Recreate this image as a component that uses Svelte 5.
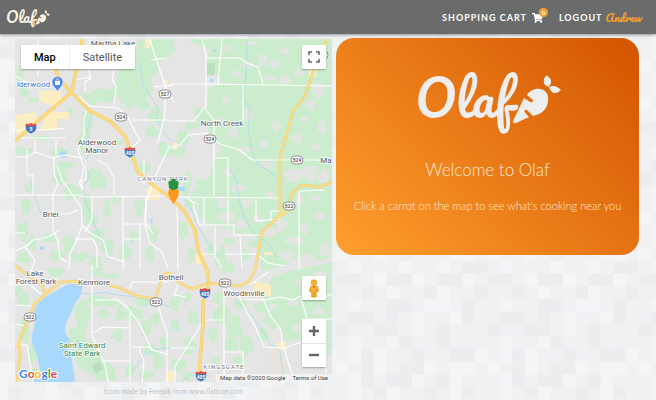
<script>
  const tileRows = [
    '121112112100',
    '001200210021',
    '110121102110',
    '121100122101',
    '100101211201',
    '011001210111',
    '121120110111',
    '120211011002',
    '210210021221',
    '120100210211',
    '121021101201',
    '211210111221'
  ];
  const tileShades = ['#ecedef', '#f0f1f3', '#f4f5f7'];
  const tiles = tileRows.flatMap((row, y) =>
    [...row].map((c, x) => ({ x: x * 12.6, y: y * 12.6, fill: tileShades[+c] }))
  );

  // Irregular patch of land: a wobbly closed outline around a centre.
  function patch([x, y, rx, ry], i) {
    const pts = [];
    for (let k = 0; k < 14; k++) {
      const a = (k / 14) * Math.PI * 2;
      const wobble = 0.95 + 0.3 * Math.sin(k * 2.7 + i * 1.9) * Math.cos(k * 1.3 + i);
      pts.push(`${(x + Math.cos(a) * rx * wobble).toFixed(1)} ${(y + Math.sin(a) * ry * wobble).toFixed(1)}`);
    }
    return 'M' + pts.join('L') + 'Z';
  }

  const woods = [
    [20, 75, 4, 8], [24, 92, 5, 6], [33, 100, 6, 3], [87, 123, 6, 14], [84, 142, 6, 12], [70, 112, 4, 5],
    [156, 115, 8, 9], [152, 132, 7, 6], [166, 150, 9, 8], [118, 142, 5, 4], [42, 138, 10, 3], [20, 150, 4, 5],
    [28, 152, 6, 4], [60, 152, 10, 5], [60, 175, 7, 11], [72, 192, 9, 8], [66, 165, 8, 4], [94, 178, 8, 11],
    [103, 183, 5, 6], [87, 207, 5, 14], [92, 220, 6, 6], [107, 208, 4, 11], [116, 200, 4, 5], [30, 188, 6, 4],
    [26, 206, 5, 9], [23, 231, 6, 10], [32, 243, 5, 8], [24, 258, 7, 6], [48, 238, 7, 5], [57, 255, 8, 6],
    [68, 244, 6, 9], [80, 257, 10, 5], [98, 235, 8, 7], [108, 247, 7, 8], [96, 262, 8, 6], [125, 252, 7, 9],
    [133, 236, 5, 7], [139, 207, 5, 10], [145, 168, 6, 6], [153, 234, 6, 9], [150, 254, 5, 9], [134, 158, 4, 3],
    [183, 138, 7, 8], [192, 126, 8, 4], [199, 112, 6, 5], [180, 152, 6, 6], [187, 181, 5, 9], [191, 203, 6, 8],
    [185, 190, 5, 6], [202, 190, 9, 12], [205, 211, 8, 8], [183, 230, 5, 10], [191, 255, 4, 8], [211, 70, 5, 6],
    [24, 300, 6, 8], [25, 330, 5, 15], [33, 352, 4, 12], [36, 374, 6, 7], [18, 290, 4, 6], [56, 272, 9, 5],
    [97, 272, 7, 5], [111, 276, 9, 3], [97, 301, 14, 6], [110, 303, 7, 5], [104, 314, 6, 5], [82, 317, 8, 17],
    [77, 337, 9, 12], [85, 355, 12, 16], [96, 365, 10, 14], [108, 373, 9, 10], [121, 313, 5, 9], [134, 314, 9, 8],
    [143, 302, 9, 5], [146, 328, 6, 9], [155, 318, 6, 6], [118, 335, 5, 7], [130, 370, 5, 8], [150, 350, 9, 6],
    [158, 361, 5, 9], [146, 375, 8, 5], [164, 343, 5, 7], [175, 303, 6, 8], [187, 297, 5, 5], [175, 325, 5, 7],
    [193, 318, 6, 8], [189, 346, 6, 10], [178, 365, 8, 7], [187, 376, 6, 5], [213, 335, 6, 8], [222, 315, 9, 11],
    [235, 327, 8, 12], [231, 344, 7, 8], [246, 345, 7, 11], [239, 362, 6, 7], [218, 298, 6, 6], [216, 361, 4, 4],
    [221, 258, 6, 12], [211, 250, 4, 8], [229, 268, 6, 6], [246, 255, 5, 6], [229, 241, 6, 4], [240, 304, 7, 5],
    [262, 307, 8, 6], [272, 319, 8, 10], [273, 299, 9, 6], [263, 335, 6, 8]
  ];

  const clearings = [
    [228, 48, 4, 3], [252, 43, 9, 2], [262, 60, 5, 7], [274, 64, 6, 5], [248, 65, 7, 3], [285, 51, 5, 4],
    [238, 74, 6, 4], [269, 78, 7, 3], [285, 80, 6, 5], [299, 73, 5, 4], [318, 90, 7, 8], [311, 105, 5, 6],
    [248, 115, 4, 8], [233, 133, 6, 6], [221, 121, 5, 4], [226, 100, 4, 4], [244, 150, 8, 4], [264, 144, 5, 5],
    [276, 126, 5, 6], [297, 138, 6, 5], [322, 127, 5, 8], [304, 119, 4, 4], [315, 147, 5, 4], [266, 165, 7, 4],
    [294, 175, 11, 7], [310, 173, 9, 8], [324, 177, 6, 8], [228, 172, 5, 5], [238, 188, 8, 4], [222, 202, 6, 7],
    [247, 203, 6, 5], [270, 195, 5, 4], [227, 217, 9, 6], [213, 228, 8, 5], [241, 224, 7, 6], [258, 219, 6, 5],
    [270, 232, 7, 6], [281, 225, 6, 7], [294, 241, 10, 5], [287, 255, 8, 6], [304, 229, 5, 6], [320, 216, 6, 5],
    [325, 250, 6, 7], [309, 261, 7, 5], [244, 238, 11, 6], [299, 200, 4, 6], [315, 198, 6, 3], [302, 283, 7, 4],
    [293, 303, 6, 4], [319, 311, 6, 5], [298, 328, 7, 5], [314, 336, 5, 5], [321, 274, 6, 4]
  ];

  const roads = [
    'M15 82H27L30 89M15 76L30 84L52 88M15 130H45L65 128M38 39V76M52 72L60 62L88 63',
    'M90 39L87 63L91 78L85 82V92M75 80L90 77M78 96L89 106L118 108L128 117L135 132L140 140L133 147',
    'M118 39L116 62L112 78L116 87L114 105M89 105L84 118V135L78 150L84 167L81 180L83 190',
    'M15 138H66M35 139V152M56 140V156M15 157H27L36 152L52 158L65 155L83 158',
    'M15 195L79 195L85 197L175 196M27 150V175H33V195M54 157V173L58 184L53 195V230L58 241L60 258L68 262',
    'M57 165L62 180L75 198L81 207L82 225L77 240L70 253L69 270M82 225L90 233L103 240L108 257L125 262',
    'M53 214H69L78 210M86 160V179L79 182L83 190M98 160L107 165L114 178V195M92 196V220L85 232M123 196V270',
    'M15 233H25M15 251L25 247L33 240L48 237L58 231M25 247L35 260L31 272M75 239L93 239L97 248V268',
    'M123 224H145L150 243L162 252L168 268M146 196L145 222L153 234M144 160V184M140 224V270M123 239H140',
    'M150 39L153 50L165 85L174 102M151 60L167 58M153 87L174 85M165 84V115L158 142M170 145L153 181L147 200L145 221',
    'M202 39L206 54V110L214 120V156M170 84H206L332 86M206 58H240L247 63L258 67L263 84M222 39L218 84',
    'M243 85V120M206 105L194 121H170M170 148L181 144L188 135L206 133L220 144L240 150L252 160H332M170 120H132',
    'M170 197L280 198M214 150V158H228V226M214 158V196M204 197V224M193 205L199 225H234V235H260M240 235L242 268',
    'M256 199V221L280 219M271 221V211H280M299 191V270M300 191L325 190M215 227V256L222 268M199 254H216M177 204L178 270M187 197L195 204',
    'M15 285L29 284L41 294M92 265V335L105 365L108 382M95 300H118L127 307L139 323L152 350L167 354M93 333L103 327L130 328M104 361H130',
    'M130 313V382M131 347H148L153 350M139 348L144 361L142 382M170 348H194M130 289L132 282H169M158 302L161 316L167 332V382M175 382V366L190 342L205 319',
    'M178 285L174 295L186 297M224 285V382M207 320H224M224 352H243V382M236 290L243 305L255 326L264 347L284 348L294 382',
    'M225 285L241 299L265 300L280 297L293 300L305 294L317 300L332 294M283 349L301 342M263 299L270 315L281 330L282 347',
    'M250 285L268 272M225 254H258M258 255L268 263L284 266M301 298L307 319H332M326 320V373M15 305L31 306M15 324L25 326M15 345H27L33 382'
  ];

  const creeks = [
    'M140 65L143 85L150 95L158 108L156 119L163 131L172 142',
    'M93 112L87 130L91 148L85 163L90 176L83 188L86 203L91 215L97 231L105 246L109 260',
    'M80 293L93 294L105 292L118 295L138 297L154 302L170 307',
    'M247 39L246 80L242 95L250 109L248 130L252 152L258 164L277 177',
    'M227 165L236 180L240 204L245 220L253 232L268 243L276 257',
    'M184 198L192 211L198 226L207 242L213 250',
    'M235 300L251 314L262 330L270 344L280 351L283 374',
    'M134 370L144 355L156 349L170 348M181 382L190 375L200 371',
    'M30 180L36 199L41 213M75 292L65 289'
  ];

  const freeways = [
    'M15 141L30 128L47 113L65 98L72 91L75 75L80 60L82 39',
    'M50 58L60 80L73 94L90 111L110 121L125 136L131 152L138 172L153 185L173 200L185 212L195 230L198 250L207 270L209 283L203 303V325L200 362L199 382'
  ];

  const highways = [
    'M17 382L20 355L19 342L30 315L35 303L47 293L60 282L77 281L97 282L120 288L137 296L155 299L160 285L162 275L170 273L178 282L192 289L208 283L227 285L240 286L249 281L255 270L262 232L277 218L288 211L292 193L302 185L320 187L332 182',
    'M327 39L315 66L305 96L293 111L287 133L280 156V214L276 220',
    'M15 265L27 275L42 285L45 294',
    'M15 346H20'
  ];

  const stateRoutes = [
    ['527', 165, 94], ['524', 121, 117], ['524', 210, 139], ['524', 297, 160], ['522', 289, 206],
    ['522', 30, 317], ['522', 156, 302], ['522', 225, 283]
  ];
  const interstates = [['5', 31, 128], ['405', 130, 152], ['405', 205, 293], ['405', 201, 376]];

  const places = [
    ['Martha Lake', 113, 46], ['North Creek', 222, 126], ['Alderwood', 97, 145], ['Manor', 97, 153],
    ['Brier', 51, 217], ['Lake', 35, 276], ['Forest Park', 36, 284], ['Kenmore', 94, 285],
    ['Bothell', 171, 280], ['Woodinville', 244, 296], ['Ma', 326, 163]
  ];

  const google = [['G', '#4285f4'], ['o', '#ea4335'], ['o', '#fbbc05'], ['g', '#4285f4'], ['l', '#34a853'], ['e', '#ea4335']];

  let view = $state('Map');
  let cartCount = $state(0);
</script>

{#snippet logo()}
  <svg class="logo" viewBox="0 0 146 62" role="img" aria-label="Olaf">
    <text class="wordmark" x="0" y="47">Olaf</text>
    <path d="M98.500 49L109 27L115 31Q118 32 118 29L112 24C115 19 121 17 125 18C132 19 134 25 133 30C132 38 128 41 124 43L118 45L112 39Q109 38 109.500 41L114 46L101 52Q97 53 98.500 49Z" />
    <path d="M133.500 16C127 14 128 7 131.700 4.300C137 8 137.500 12 133.500 16ZM134 16.500C138 13.500 142 15.500 146 19C141 24 136 22.500 134 16.500Z" />
  </svg>
{/snippet}

<div class="page">
  <svg class="backdrop" aria-hidden="true">
    <defs>
      <pattern id="mosaic" x="33.700" y="109.800" width="151.200" height="151.200" patternUnits="userSpaceOnUse">
        {#each tiles as t}
          <rect x={t.x} y={t.y} width="12.700" height="12.700" fill={t.fill} />
        {/each}
      </pattern>
    </defs>
    <rect width="100%" height="100%" fill="url(#mosaic)" />
  </svg>

  <header>
    <a class="brand" href="#home">{@render logo()}</a>
    <nav>
      <a class="cart" href="#cart">
        <span>SHOPPING CART</span>
        <span class="basket">
          <svg viewBox="0 0 576 512" aria-hidden="true">
            <path d="M528 301l47-208c4-15-8-29-23-29H159l-9-45C148 8 138 0 127 0H24C11 0 0 11 0 24v16c0 13 11 24 24 24h70l70 343c-17 10-28 28-28 49 0 31 25 56 56 56s56-25 56-56c0-16-6-30-17-40h210c-11 10-17 24-17 40 0 31 25 56 56 56s56-25 56-56c0-22-13-41-32-50l6-25c3-15-8-29-24-29H218l-7-32h294c11 0 21-8 23-19z" />
          </svg>
          <span class="badge">{cartCount}</span>
        </span>
      </a>
      <a class="account" href="#logout">LOGOUT <span class="user">Andrew</span></a>
    </nav>
  </header>

  <main>
    <section class="left">
      <div class="map">
        <svg class="canvas" viewBox="15 39 317 343" preserveAspectRatio="xMidYMid slice" role="img" aria-label="Map of carrots near Canyon Park">
          <rect x="15" y="39" width="317" height="343" fill="#e5e5e5" />
          <g fill="#cbeccd">
            <path d="M139 39L172 39L176 50L168 58L160 62L158 72L151 78L153 90L146 99L150 108L142 112L136 104L128 110L122 103L118 96L110 103L100 100L94 106L85 101L80 92L88 94L98 88L108 91L116 84L118 74L124 66L130 60L136 51Z" />
            <path d="M188 39H332V256L320 261L307 253L293 259L281 267L262 271L259 249L245 244L231 229L207 224L200 210L196 193L209 178L216 155L222 149L211 137L206 124L194 121L206 104L209 88L223 82L206 61L211 49L196 44Z" />
            <path d="M272 278L290 271L332 262V356L320 350L307 355L299 339L286 342L280 326L270 318L277 307L264 295Z" />
            {#each woods as w, i}<path d={patch(w, i)} />{/each}
          </g>
          <g fill="#e3e5e3">
            {#each clearings as c, i}<path d={patch(c, i)} />{/each}
          </g>
          <path fill="#b9dfbd" d="M207 63H215V75H207ZM73 343L79 340L84 346L78 350ZM92 366L99 361L103 369L96 373Z" />
          <path fill="#fceec3" d="M39 91H61V103L53 106L39 101ZM15 116L35 112L38 122L29 130H15ZM15 129H24L19 137ZM44 112H69V119H57V130H42ZM147 188L158 184L160 200H147ZM145 39H150V48H145ZM163 80H168V86H163ZM309 69H316V77H309ZM254 281L271 285V297L254 291ZM166 371H174V382H166ZM196 255L203 251V264H196ZM264 252H273V255H264ZM173 143H177V150H173ZM278 342H286V350H278Z" />
          <path fill="#e8e3db" d="M137 284L150 284V293H137ZM271 349L283 351L291 374H268Z" />
          <g class="creek">{#each creeks as d}<path {d} />{/each}</g>
          <path fill="#a8d9fd" d="M63 287C70 282 77 285 83 285L80 297L75 303L71 313L66 323L65 332L70 341L71 352L73 367L75 382H33L40 371L37 356L32 343V334L35 323L34 311L39 302L47 296ZM60 152L66 151V157L60 158ZM40 246H44V250H40ZM178 187H185V191H178ZM150 220L153 217L152 226ZM213 49L217 50L215 53ZM210 79H213V82H210Z" />
          <g class="road">{#each roads as d}<path {d} />{/each}</g>
          <g class="edge">{#each highways as d}<path {d} />{/each}</g>
          <g class="fill">{#each highways as d}<path {d} />{/each}</g>
          <g class="edge wide">{#each freeways as d}<path {d} />{/each}</g>
          <g class="fill wide">{#each freeways as d}<path {d} />{/each}</g>
          {#each stateRoutes as [n, x, y]}
            <rect x={x - 6} y={y - 4} width="12" height="8" rx="4" fill="#fff" stroke="#777" stroke-width=".8" />
            <text class="shield" {x} y={y + 2}>{n}</text>
          {/each}
          <rect x="317" y="51" width="11" height="8" rx="4" fill="#fff" stroke="#777" stroke-width=".8" />
          {#each interstates as [n, x, y]}
            <g transform="translate({x} {y})">
              <path fill="#4477bd" stroke="#fff" stroke-width=".6" d="M-5 -4L5 -4Q8 3 0 6Q-8 3 -5 -4Z" />
              <path fill="#dc5148" d="M-5 -4.500Q-3 -3.500 0 -5Q3 -3.500 5 -4.500L5.500 -2H-5.500Z" />
              <text class="shield light" x="0" y="3">{n}</text>
            </g>
          {/each}
          {#each places as [name, x, y]}<text class="place" {x} {y}>{name}</text>{/each}
          <text class="place area" x="163" y="181">CANYON PARK</text>
          <text class="place area" x="224" y="369">KINGSGATE</text>
          <text class="place park" x="82" y="348">Saint Edward</text>
          <text class="place park" x="82" y="356">State Park</text>
          <text class="place shop" x="50" y="87">lderwood</text>
          <path fill="#4688f1" stroke="#fff" stroke-width=".5" d="M57.500 92C56 87 52 87 52 82A5.500 5.500 0 0 1 63 82C63 87 59 87 57.500 92Z" />
          <path fill="#fff" d="M55 81H60V85H55Z" />
          <path fill="none" stroke="#fff" stroke-width=".8" d="M56 81V79.500Q57.500 77.500 59 79.500V81" />
          <path fill="#ff981d" d="M168.500 190Q173.500 186 178.500 190Q179.500 195 176 200L173.500 204.500L171 200Q167.500 195 168.500 190Z" />
          <path fill="#23943f" d="M168.500 182Q169.500 180 171 181Q171.500 178.500 173.500 178.500Q175.500 178.500 176 181Q177.500 180 178.500 182Q179 184 178 185.500Q179 188 176.500 189Q173.500 191 170.500 189Q168 188 169 185.500Q168 184 168.500 182Z" />
          <path fill="none" stroke="#ee7f0e" stroke-width=".6" d="M169 193H172M175 196H178M171 199H173" />
        </svg>

        <div class="types">
          {#each ['Map', 'Satellite'] as kind}
            <button class:active={view === kind} onclick={() => (view = kind)}>{kind}</button>
          {/each}
        </div>

        <div class="controls">
          <button class="tool" aria-label="Toggle fullscreen view">
            <svg viewBox="0 0 12 12"><path d="M1 4V1H4M8 1H11V4M11 8V11H8M4 11H1V8" fill="none" stroke="#666" stroke-width="1.600" /></svg>
          </button>
          <div class="lower">
            <button class="tool" aria-label="Street View">
              <svg class="pegman" viewBox="0 0 12 20">
                <path fill="#f5b22c" stroke="#dc9018" stroke-width=".7" d="M2.500 7.500H9.500L11 13L9.500 13.500L8.500 11V19H3.500V11L2.500 13.500L1 13Z" />
                <circle cx="6" cy="3.800" r="3" fill="#f5b22c" stroke="#dc9018" stroke-width=".7" />
                <path d="M4 7.500L6 9.500L8 7.500Z" fill="#d7652b" />
                <path d="M6 13V19" stroke="#c77c17" stroke-width=".8" />
              </svg>
            </button>
            <div class="zoom">
              <button aria-label="Zoom in"><svg viewBox="0 0 12 12"><path d="M6 1V11M1 6H11" stroke="#666" stroke-width="2.400" /></svg></button>
              <button aria-label="Zoom out"><svg viewBox="0 0 12 12"><path d="M1 6H11" stroke="#666" stroke-width="2.400" /></svg></button>
            </div>
          </div>
        </div>

        <a class="google" href="#google" aria-label="Google">{#each google as [c, color]}<span style:color>{c}</span>{/each}</a>
        <div class="legal"><span>Map data ©2020 Google</span><a href="#terms">Terms of Use</a></div>
      </div>
      <p class="credit">Icons made by Freepik from www.flaticon.com</p>
    </section>

    <section class="welcome">
      {@render logo()}
      <h1>Welcome to Olaf</h1>
      <p>Click a carrot on the map to see what's cooking near you</p>
    </section>
  </main>
</div>

<style>
  :global(body) { margin: 0; background: #f0f1f3; }
  .page { position: relative; min-height: 100vh; overflow: hidden; font-family: Lato, sans-serif; }
  .backdrop { position: absolute; inset: 0; width: 100%; height: 100%; z-index: -1; }
  a { color: inherit; text-decoration: none; }
  button { border: 0; margin: 0; padding: 0; background: #fff; cursor: pointer; }

  header {
    display: flex; align-items: center; justify-content: space-between;
    position: relative; box-sizing: border-box; height: 34px; padding: 2px 14px 0 6px;
    background: rgba(91, 92, 92, 0.9); box-shadow: 0 1px 3px rgba(0, 0, 0, 0.4); color: #fff;
  }
  .logo { display: block; overflow: visible; fill: #eee; }
  .wordmark { font: 400 50px Pacifico, cursive; }
  .brand .logo { width: 44px; fill: #fff3df; }
  nav { display: flex; align-items: center; gap: 11px; font-size: 9px; font-weight: 700; line-height: 12px; letter-spacing: 1px; }
  nav a { display: flex; align-items: center; gap: 5px; }
  nav .account { gap: 3px; }
  .basket { position: relative; width: 16px; height: 10px; }
  .basket svg { display: block; width: 11px; height: 10px; fill: #fff; }
  .badge {
    position: absolute; left: 7px; top: -5px; width: 9px; height: 9px; border-radius: 50%;
    background: #f9a02c; font-size: 6px; line-height: 9px; letter-spacing: 0; text-align: center;
  }
  .user { font: 400 11px/12px Pacifico, cursive; letter-spacing: 0; color: #f9a02c; }

  main { display: grid; grid-template-columns: 317fr 303fr; gap: 4px; align-items: start; padding: 4px 17px 0 15px; }
  .left { padding-top: 1px; }
  .map { position: relative; height: calc(100vh - 57px); min-height: 240px; overflow: hidden; font-family: Roboto, sans-serif; }
  .canvas { position: absolute; width: 100%; height: 100%; }
  .canvas g { stroke-linejoin: round; }
  .road { fill: none; stroke: #fff; stroke-width: 1.1px; }
  .creek { fill: none; stroke: #aad9ee; stroke-width: 0.8px; }
  .edge, .fill { fill: none; stroke: #f3ca67; stroke-width: 2.6px; }
  .fill { stroke: #fde08c; stroke-width: 1.6px; }
  .edge.wide { stroke-width: 3.4px; }
  .fill.wide { stroke: #fddc80; stroke-width: 2.2px; }
  .shield { font: 500 5px Roboto, sans-serif; text-anchor: middle; fill: #444; }
  .shield.light { font-weight: 700; fill: #fff; }
  .place { font: 400 8px Roboto, sans-serif; text-anchor: middle; fill: #555; stroke: #fff; stroke-width: 1.5px; paint-order: stroke; }
  .area { font-size: 6px; letter-spacing: 1px; fill: #6c7791; }
  .park { fill: #23864b; }
  .shop { text-anchor: end; fill: #4077c9; }

  .types {
    position: absolute; left: 6px; top: 6px; display: flex; height: 24px;
    border-radius: 1px; background: #fff; box-shadow: 0 1px 2px rgba(0, 0, 0, 0.3);
  }
  .types button { padding: 0 13px; font: 400 11px Roboto, sans-serif; color: #565656; }
  .types button + button { border-left: 1px solid #eee; }
  .types .active { font-weight: 500; color: #000; }
  .controls { position: absolute; right: 6px; top: 6px; bottom: 15px; display: flex; flex-direction: column; justify-content: space-between; }
  .lower { display: grid; gap: 19px; }
  .tool, .zoom { width: 24px; border-radius: 1px; background: #fff; box-shadow: 0 1px 2px rgba(0, 0, 0, 0.3); }
  .controls button { display: grid; place-items: center; width: 24px; height: 24px; }
  .controls svg { width: 12px; height: 12px; }
  .controls .pegman { width: 12px; height: 19px; }
  .zoom button + button { box-shadow: inset 0 1px #e6e6e6; }
  .google {
    position: absolute; left: 4px; bottom: 1px; font: 700 12px/14px Lato, sans-serif;
    -webkit-text-stroke: 2px #fff; paint-order: stroke fill;
  }
  .legal {
    position: absolute; right: 0; bottom: 0; display: flex; gap: 7px; padding: 0 4px;
    background: rgba(245, 245, 245, 0.75); font-size: 6px; line-height: 8px; color: #444;
  }
  .credit { margin: 3px 0 0; font-size: 7px; line-height: 12px; font-weight: 300; text-align: center; color: #999; }

  .welcome {
    box-sizing: border-box; display: flex; flex-direction: column; align-items: center;
    padding: 33px 12px 40px; border-radius: 18px; text-align: center; color: #ffe9d0;
    background: linear-gradient(45deg, #ff9f2e, #d35400);
  }
  .welcome .logo { width: 146px; max-width: 100%; }
  h1 { margin: 26px 0 0; font-size: 17px; line-height: 22px; font-weight: 300; }
  .welcome p { margin: 16px 0 0; font-size: 11px; line-height: 18px; font-weight: 300; }
</style>
